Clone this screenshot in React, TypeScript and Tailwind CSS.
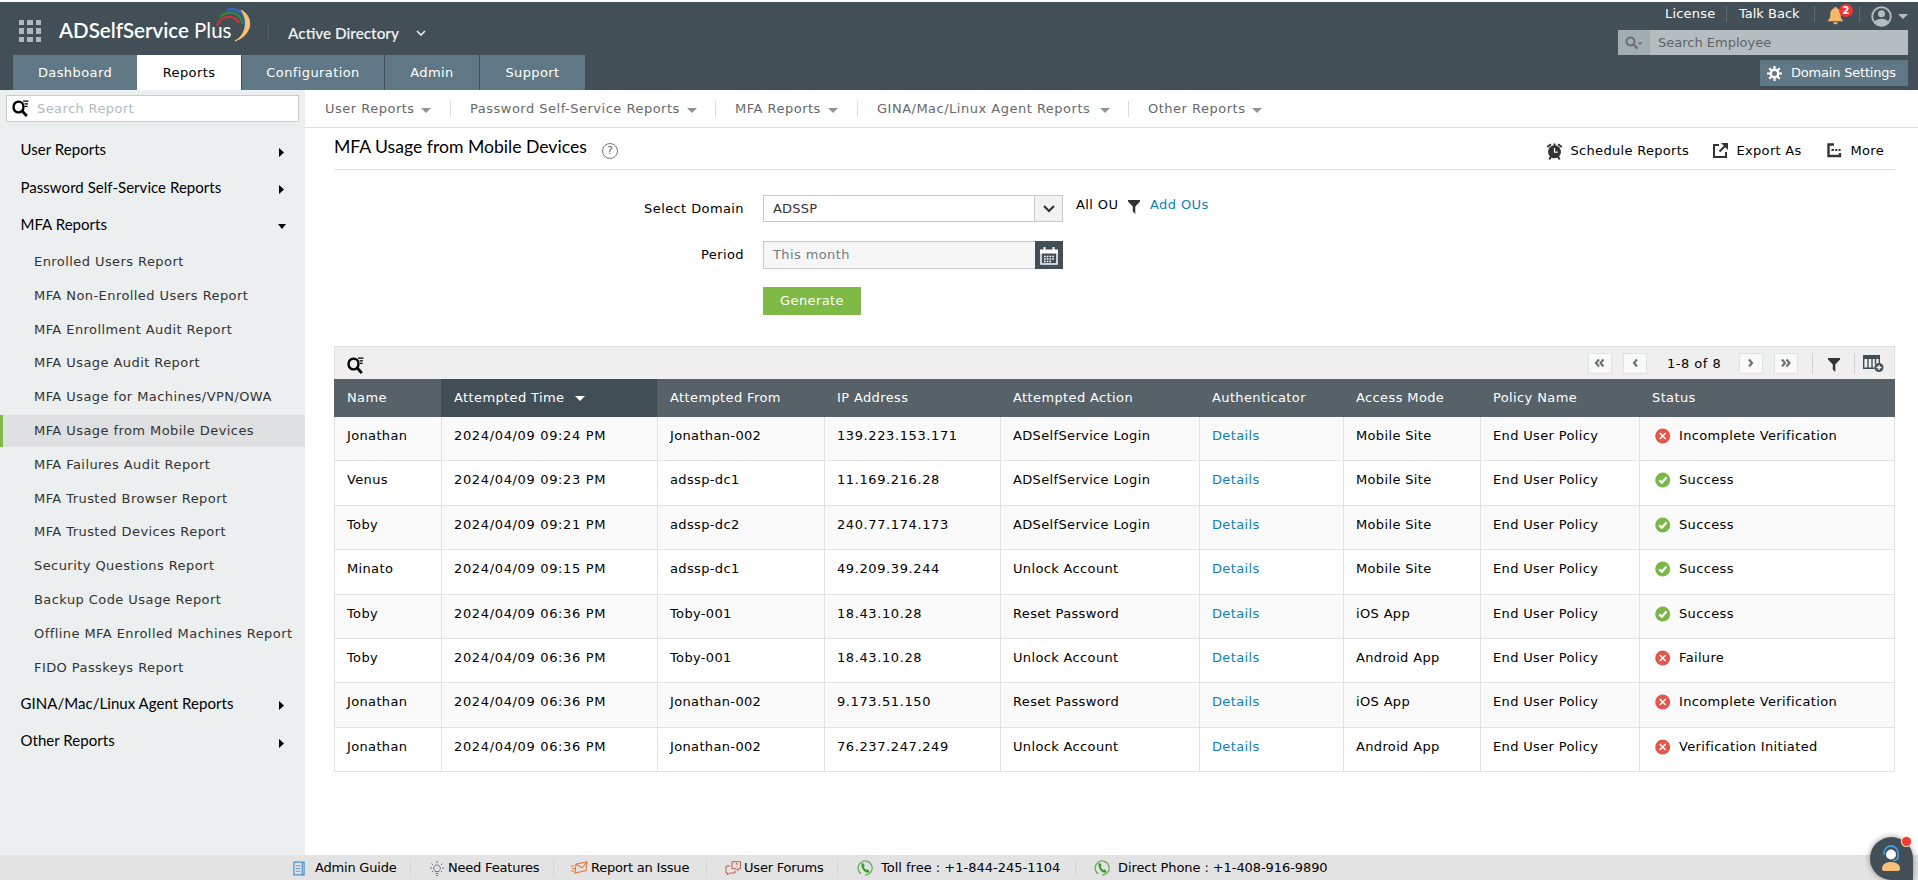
import type { ReactNode } from "react";

const navTabs = [
  { label: "Dashboard", className: "w-[124px] bg-[#607885] text-white" },
  { label: "Reports", className: "w-[104px] bg-white text-black" },
  { label: "Configuration", className: "ml-px w-[142px] bg-[#607885] text-white" },
  { label: "Admin", className: "ml-px w-[94px] bg-[#607885] text-white" },
  { label: "Support", className: "ml-px w-[105px] bg-[#607885] text-white" },
];

const subNav = [
  { label: "User Reports", className: "w-[126px]", text: "w-[96px]" },
  { label: "Password Self-Service Reports", className: "w-[246px]", text: "w-[217px]" },
  { label: "MFA Reports", className: "w-[123px]", text: "w-[93px]" },
  { label: "GINA/Mac/Linux Agent Reports", className: "w-[252px]", text: "w-[223px]" },
  { label: "Other Reports", className: "w-[120px]", text: "w-[104px]" },
];

const mfaReports = [
  "Enrolled Users Report",
  "MFA Non-Enrolled Users Report",
  "MFA Enrollment Audit Report",
  "MFA Usage Audit Report",
  "MFA Usage for Machines/VPN/OWA",
  "MFA Usage from Mobile Devices",
  "MFA Failures Audit Report",
  "MFA Trusted Browser Report",
  "MFA Trusted Devices Report",
  "Security Questions Report",
  "Backup Code Usage Report",
  "Offline MFA Enrolled Machines Report",
  "FIDO Passkeys Report",
];

const headers = [
  "Name",
  "Attempted Time",
  "Attempted From",
  "IP Address",
  "Attempted Action",
  "Authenticator",
  "Access Mode",
  "Policy Name",
  "Status",
];

interface Row {
  name: string;
  time: string;
  from: string;
  ip: string;
  action: string;
  mode: string;
  status: string;
  height: string;
}

const rows: Row[] = [
  { name: "Jonathan", time: "2024/04/09 09:24 PM", from: "Jonathan-002", ip: "139.223.153.171", action: "ADSelfService Login", mode: "Mobile Site", status: "Incomplete Verification", height: "h-[44px]" },
  { name: "Venus", time: "2024/04/09 09:23 PM", from: "adssp-dc1", ip: "11.169.216.28", action: "ADSelfService Login", mode: "Mobile Site", status: "Success", height: "h-[45px]" },
  { name: "Toby", time: "2024/04/09 09:21 PM", from: "adssp-dc2", ip: "240.77.174.173", action: "ADSelfService Login", mode: "Mobile Site", status: "Success", height: "h-[44px]" },
  { name: "Minato", time: "2024/04/09 09:15 PM", from: "adssp-dc1", ip: "49.209.39.244", action: "Unlock Account", mode: "Mobile Site", status: "Success", height: "h-[45px]" },
  { name: "Toby", time: "2024/04/09 06:36 PM", from: "Toby-001", ip: "18.43.10.28", action: "Reset Password", mode: "iOS App", status: "Success", height: "h-[44px]" },
  { name: "Toby", time: "2024/04/09 06:36 PM", from: "Toby-001", ip: "18.43.10.28", action: "Unlock Account", mode: "Android App", status: "Failure", height: "h-[44px]" },
  { name: "Jonathan", time: "2024/04/09 06:36 PM", from: "Jonathan-002", ip: "9.173.51.150", action: "Reset Password", mode: "iOS App", status: "Incomplete Verification", height: "h-[45px]" },
  { name: "Jonathan", time: "2024/04/09 06:36 PM", from: "Jonathan-002", ip: "76.237.247.249", action: "Unlock Account", mode: "Android App", status: "Verification Initiated", height: "h-[44px]" },
];

const gridCols =
  "grid grid-cols-[107px_216px_167px_176px_199px_144px_137px_159px_254px]";

const Caret = ({ className }: { className: string }) => (
  <svg width="10" height="5" viewBox="0 0 10 5" className={className}>
    <path d="M0 0h10L5 5z" fill="currentColor" />
  </svg>
);

const SearchListIcon = () => (
  <svg width="17" height="17" viewBox="0 0 17 17" fill="none" stroke="#000">
    <ellipse cx="6.5" cy="7" rx="5" ry="5.4" strokeWidth="2.4" />
    <path d="M9.2 10l5.6 6" strokeWidth="2.7" />
    <path d="M11 1.2h5.5M12.500 3.800h3.500M13 6.300h2.500" strokeWidth="1.3" />
  </svg>
);

const FunnelIcon = () => (
  <svg width="12" height="14" viewBox="0 0 12 14" fill="#333">
    <path d="M0 0h12v1.500L7.300 6.500V14L4.800 11.500v-5L0 1.500z" />
  </svg>
);

const PhoneIcon = () => (
  <svg width="16" height="16" viewBox="0 0 16 16" fill="none">
    <path d="M4.2 13.8A7 7 0 1 1 8 15" stroke="#6aa84f" strokeWidth="1.2" />
    <path
      d="M4.600 3.600 6 3l1.700 2.600-1 1.200c.5 1.400 1.400 2.400 2.500 3.100l1.300-.7 2 2-1 1.600c-3.800.4-7.900-4.800-6.900-9.200z"
      fill="#2f9a2f"
    />
  </svg>
);

const StatusIcon = ({ ok }: { ok: boolean }) => (
  <svg width="16" height="16" viewBox="0 0 16 16" fill="none" stroke="#fff">
    <circle cx="7.700" cy="8" r="7.500" fill={ok ? "#7ab648" : "#e2564b"} stroke="none" />
    {ok ? (
      <path d="M4.300 8.300l2.600 2.400 4.600-5.200" strokeWidth="2.300" />
    ) : (
      <path d="m4.700 5 6 6M10.700 5l-6 6" strokeWidth="1.500" />
    )}
  </svg>
);

const Header = () => (
  <header className="flex h-[88px] justify-between bg-[#434f57]">
    <div className="flex flex-col">
      <div className="flex h-[53px] pl-[19px]">
        <div className="mt-[18px] grid h-[22px] w-[22px] grid-cols-3 gap-[3px]">
          {Array.from({ length: 9 }, (_, i) => (
            <span key={i} className="bg-[#b0b8bc]" />
          ))}
        </div>
        <div className="relative mt-3 ml-[18px] h-8 w-[192px] font-['Lato'] text-[20.5px] leading-8 whitespace-nowrap text-white">
          <span className="font-semibold">ADSelfService</span>
          <span> Plus</span>
          <svg
            className="absolute top-[-6px] left-[157px]"
            width="36"
            height="34"
            viewBox="0 0 36 34"
            fill="none"
          >
            <path d="M1 18C4 8 17 5 23 15" stroke="#d8302f" strokeWidth="2" />
            <path d="M4 9C12 2 24 3 27 16" stroke="#2f8a3e" strokeWidth="2.2" />
            <path d="M11 2C22-1 31 6 29 19" stroke="#3567c0" strokeWidth="2.4" />
            <path d="M25 2C37 8 38 26 19 33C30 27 33 12 25 2z" fill="#f6c273" stroke="#f6c273" />
          </svg>
        </div>
        <div className="mt-[21px] ml-[17px] h-4 w-px bg-[#525e66]" />
        <div className="mt-[17px] ml-[19px] flex h-7 items-center font-['Lato'] text-[15.3px] font-semibold text-[#eef1f2]">
          <span className="w-[128px]">Active Directory</span>
          <svg width="10" height="7" viewBox="0 0 10 7" fill="none">
            <path d="m1 1 4 4 4-4" stroke="#e5e8ea" strokeWidth="1.7" />
          </svg>
        </div>
      </div>
      <nav className="flex h-[35px] pl-[13px] tracking-[0.4px]">
        {navTabs.map((tab) => (
          <a key={tab.label} className={`flex items-center justify-center ${tab.className}`}>
            {tab.label}
          </a>
        ))}
      </nav>
    </div>
    <div className="flex flex-col items-end pr-2.5 text-white">
      <div className="flex h-7 items-center pb-1">
        <span className="w-[61px] tracking-[0.2px]">License</span>
        <i className="h-4 w-px bg-[#5d686f]" />
        <span className="ml-3 w-[75px]">Talk Back</span>
        <i className="h-4 w-px bg-[#5d686f]" />
        <div className="relative mt-1 ml-3 w-8">
          <svg width="17" height="18" viewBox="0 0 17 19" fill="#f6b96b">
            <path d="M8.500 0c1.200 0 1.700.8 1.700 1.700C13 2.500 14 5 14 8c0 4 1 5 3 7H0c2-2 3-3 3-7 0-3 1-5.500 3.800-6.300C6.800.8 7.300 0 8.500 0zM6 16h5c-.3 3-4.700 3-5 0z" />
          </svg>
          <span className="absolute top-[-3px] left-[12px] flex h-[13px] w-[14px] items-center justify-center rounded-full bg-[#ee3535] text-[10px] leading-none font-bold">
            2
          </span>
        </div>
        <i className="h-4 w-px bg-[#5d686f]" />
        <svg className="mt-1 ml-[11px] text-[#b5bcc0]" width="21" height="21" viewBox="0 0 21 21">
          <circle cx="10.5" cy="10.5" r="10.2" fill="currentColor" />
          <circle cx="10.5" cy="7.2" r="3.6" fill="#434f57" />
          <path
            d="M10.500 2.300a8.200 8.200 0 0 0-6.600 13.100c2-3.600 11.200-3.600 13.200 0A8.200 8.200 0 0 0 10.500 2.300z"
            fill="#434f57"
          />
          <circle cx="10.5" cy="7.8" r="3.5" fill="currentColor" />
        </svg>
        <Caret className="mt-1 ml-1.5 text-[#b5bcc0]" />
      </div>
      <div className="flex h-[25px] w-[290px] bg-[#b6bdc0] text-[#5c6468]">
        <div className="flex w-8 items-center justify-center bg-[#a1adb1]">
          <svg width="18" height="14" viewBox="0 0 18 14" fill="none" stroke="#6b6c76">
            <circle cx="5.5" cy="5.5" r="4" strokeWidth="2" />
            <path d="m8.500 8.500 4 4" strokeWidth="2.4" />
            <path d="M12.500 6.500h5L15 9z" fill="#6b6c76" stroke="none" />
          </svg>
        </div>
        <span className="pt-[3px] pl-2">Search Employee</span>
      </div>
      <div className="mt-[5px] flex h-[26px] w-[148px] items-center bg-[#607885] pl-[7px]">
        <svg width="15" height="15" viewBox="0 0 16 16" fill="none" stroke="#fff">
          <circle cx="8" cy="8" r="4" strokeWidth="2.6" />
          <path
            d="M8 0v3.500M8 12.500V16M0 8h3.500M12.500 8H16M2.400 2.400l2.400 2.400M11.200 11.200l2.400 2.400M2.400 13.600l2.400-2.400M11.200 4.800l2.400-2.400"
            strokeWidth="2.3"
          />
        </svg>
        <span className="ml-[9px] tracking-[-0.2px]">Domain Settings</span>
      </div>
    </div>
  </header>
);

const SidebarGroup = ({ label, open }: { label: string; open?: boolean }) => (
  <div className="flex h-[37.4px] items-center pb-px pl-[20.5px] font-['Lato'] text-[15px] text-black">
    <span className="w-[257px] tracking-[0.04px]">{label}</span>
    {open ? (
      <svg className="mt-1.5" width="8" height="5" viewBox="0 0 8 5">
        <path d="M0 0h8L4 5z" />
      </svg>
    ) : (
      <svg className="mt-1.5 ml-px" width="5" height="9" viewBox="0 0 5 9">
        <path d="M0 0v9l5-4.500z" />
      </svg>
    )}
  </div>
);

const Sidebar = () => (
  <aside className="w-[305px] shrink-0 bg-[#ebefef] pt-[5px]">
    <div className="ml-1.5 flex h-[27px] w-[293px] items-center border border-[#c9cccc] bg-white pl-[5px] tracking-[0.4px] text-[#b3bcbc]">
      <SearchListIcon />
      <span className="pt-px pl-2">Search Report</span>
    </div>
    <div className="mt-[9px]">
      <SidebarGroup label="User Reports" />
      <SidebarGroup label="Password Self-Service Reports" />
      <SidebarGroup label="MFA Reports" open />
    </div>
    <ul className="mt-0.5 tracking-[0.43px] whitespace-nowrap text-[#333]">
      {mfaReports.map((label, i) => (
        <li key={label} className="flex h-[33.8px] items-center">
          <a
            className={
              i === 5
                ? "flex h-8 w-full items-center border-l-3 border-[#80ba4a] bg-[#dfe0e1] pl-[31px]"
                : "pl-[34px]"
            }
          >
            {label}
          </a>
        </li>
      ))}
    </ul>
    <SidebarGroup label="GINA/Mac/Linux Agent Reports" />
    <SidebarGroup label="Other Reports" />
  </aside>
);

const SubNav = () => (
  <nav className="flex h-[38px] items-center border-b border-[#e0e0e0] pl-5 tracking-[0.5px] whitespace-nowrap text-[#66696b]">
    {subNav.map((item, i) => (
      <div
        key={item.label}
        className={`mr-[19px] flex h-4 items-center ${item.className} ${i < subNav.length - 1 ? "border-r border-[#dcdcdc]" : ""}`}
      >
        <span className={item.text}>{item.label}</span>
        <Caret className="mt-1 text-[#8f9294]" />
      </div>
    ))}
  </nav>
);

const TitleBar = () => (
  <div className="ml-[29px] flex h-[42px] w-[1561px] items-center border-b border-[#e0e0e0]">
    <h1 className="w-[268px] pb-[3px] font-['Lato'] text-[17.6px] whitespace-nowrap text-black">
      MFA Usage from Mobile Devices
    </h1>
    <span className="mt-1 flex h-4 w-4 items-center justify-center rounded-full border border-[#777] text-[11px] leading-none text-[#666]">
      ?
    </span>
    <div className="mt-1 ml-auto flex items-center pr-[11px] tracking-[0.3px] text-black">
      <svg width="17" height="18" viewBox="0 0 17 18" fill="none">
        <circle cx="8.5" cy="9.800" r="6.500" fill="#333" />
        <path d="M1.200 5 5 2.200M15.800 5 12 2.200" stroke="#333" strokeWidth="2" />
        <path d="M4.800 15l-1.500 2.500M12.200 15l1.500 2.500M8.500 1.500v3" stroke="#333" strokeWidth="2" />
        <path d="M8.500 6v4.200h3.200" stroke="#fff" strokeWidth="1.200" />
      </svg>
      <span className="ml-2 w-[142px]">Schedule Reports</span>
      <svg width="15" height="15" viewBox="0 0 15 15" fill="none" stroke="#333" strokeWidth="2">
        <path d="M6 2H1v12h12V9M6.500 8.500 12 3" />
        <path d="M8 0h7v7z" fill="#333" stroke="none" />
      </svg>
      <span className="ml-[9px] w-[90px]">Export As</span>
      <svg width="15" height="15" viewBox="0 0 15 15" fill="none" stroke="#333">
        <path d="M7 1.500H1.500V13H13v-3" strokeWidth="2.400" />
        <path d="M4.500 7H7M8.300 7h2M11.600 7h2" strokeWidth="2" />
      </svg>
      <span className="ml-[9px]">More</span>
    </div>
  </div>
);

const FilterForm = () => (
  <div className="flex h-[176px] flex-col pt-[25px] tracking-[0.4px] text-black">
    <div className="flex h-[27px]">
      <label className="w-[439px] pt-1 text-right">Select Domain</label>
      <div className="ml-[19px] flex w-[300px] border border-[#c5c8ca] bg-white">
        <span className="flex-1 pt-[3px] pl-[9px] tracking-[0.2px] text-[#333]">ADSSP</span>
        <span className="flex w-7 items-center justify-center border-l border-[#c5c8ca] bg-[#f2f2f2]">
          <svg width="12" height="8" viewBox="0 0 12 8" fill="none">
            <path d="m1 1 5 5 5-5" stroke="#333" strokeWidth="2.2" />
          </svg>
        </span>
      </div>
      <span className="ml-[13px] w-[52px]">All OU</span>
      <span className="pt-[5px]">
        <FunnelIcon />
      </span>
      <a className="ml-[10px] text-[#0f80b8]">Add OUs</a>
    </div>
    <div className="mt-[19px] flex h-7">
      <label className="w-[439px] pt-1 text-right">Period</label>
      <div className="ml-[19px] flex w-[300px]">
        <span className="flex-1 border border-r-0 border-[#c5c8ca] bg-[#f6f6f6] pt-[3px] pl-[9px] text-[#737b7d]">
          This month
        </span>
        <span className="flex w-7 items-center justify-center bg-[#434f57] pt-0.5">
          <svg width="18" height="18" viewBox="0 0 18 18" fill="none" stroke="#fff">
            <path d="M1 5.500V17h16V5.500" strokeWidth="1.5" />
            <path d="M0 4.500h18" strokeWidth="4" />
            <path d="M4.500 0v4M13.500 0v4" strokeWidth="2" />
            <path d="M4 9.500h10M4 12h10M4 14.500h7" strokeWidth="1.5" strokeDasharray="1.7 1" />
          </svg>
        </span>
      </div>
    </div>
    <button className="mt-[18px] ml-[458px] h-7 w-[98px] bg-[#7fba46] text-white">
      Generate
    </button>
  </div>
);

const PageButton = ({ className, children }: { className: string; children: ReactNode }) => (
  <span className={`flex h-[21px] w-6 items-center justify-center border border-[#dfe3e3] bg-[#f9f9f9] ${className}`}>
    <svg width="12" height="10" viewBox="0 0 12 10" fill="none" stroke="#707375" strokeWidth="2.2">
      {children}
    </svg>
  </span>
);

const ReportTable = () => (
  <section className="ml-[29px] w-[1561px] border-x border-t border-[#e2e2e2]">
    <div className="flex h-8 items-center bg-[#efefef] pl-3">
      <span className="pt-1">
        <SearchListIcon />
      </span>
      <div className="ml-auto flex items-center pr-[10px] text-black">
        <PageButton className="mr-[11px]">
          <path d="M5 1.500 2 5l3 3.500M9.500 1.500l-3 3.500 3 3.500" />
        </PageButton>
        <PageButton className="mr-[20px]">
          <path d="M8 1.500 5 5l3 3.500" />
        </PageButton>
        <span className="w-[72px] pt-0.5 tracking-[0.5px] whitespace-nowrap">1-8 of 8</span>
        <PageButton className="mr-[11px]">
          <path d="M4 1.500 7 5 4 8.500" />
        </PageButton>
        <PageButton className="mr-[14px]">
          <path d="m2 1.500 3 3.500-3 3.500M6.500 1.500l3 3.500-3 3.500" />
        </PageButton>
        <i className="mr-[15px] h-[21px] w-px bg-[#cfcfcf]" />
        <span className="mr-[14px] pt-1">
          <FunnelIcon />
        </span>
        <i className="mr-2 h-[21px] w-px bg-[#cfcfcf]" />
        <svg width="21" height="17" viewBox="0 0 21 17" fill="none" stroke="#434f57">
          <path d="M0 2h17" strokeWidth="4" />
          <path d="M.7 2v11.300h11M5 3v10M9 3v10M12.500 3v6M16.300 3v5" strokeWidth="1.4" />
          <circle cx="16" cy="12.5" r="4.5" fill="#434f57" stroke="none" />
          <path d="M13.500 12.500h5M16 10v5" stroke="#fff" strokeWidth="1.3" />
        </svg>
      </div>
    </div>
    <div className={`${gridCols} -mx-px h-[38px] bg-[#566168] tracking-[0.38px] text-white`}>
      {headers.map((label, i) => (
        <div
          key={label}
          className={`flex items-center pb-px pl-[13px] ${i === 1 ? "bg-[#424e56]" : ""}`}
        >
          {label}
          {i === 1 && <Caret className="mt-0.5 ml-[11px]" />}
        </div>
      ))}
    </div>
    {rows.map((row, i) => (
      <div
        key={i}
        className={`${gridCols} ${row.height} border-b border-[#e2e2e2] tracking-[0.35px] text-black *:border-r *:border-[#e2e2e2] *:pt-[9px] *:pl-3 ${i % 2 ? "bg-white" : "bg-[#fafafa]"}`}
      >
        <div>{row.name}</div>
        <div className="tracking-[0.65px]">{row.time}</div>
        <div>{row.from}</div>
        <div className="tracking-[0.6px]">{row.ip}</div>
        <div>{row.action}</div>
        <div className="text-[#0f80b8]">Details</div>
        <div>{row.mode}</div>
        <div>End User Policy</div>
        <div className="flex border-r-0! pl-[15px]!">
          <span className="mr-2 pt-0.5">
            <StatusIcon ok={row.status === "Success"} />
          </span>
          {row.status}
        </div>
      </div>
    ))}
  </section>
);

const FooterSep = ({ className }: { className: string }) => (
  <i className={`h-4 w-px bg-[#d3d9d9] ${className}`} />
);

const Footer = () => (
  <footer className="flex h-[25px] items-center bg-[#e3e3e3] pt-px pl-[293px] tracking-[-0.2px] whitespace-nowrap text-black">
    <svg width="12" height="15" viewBox="0 0 13 15" fill="none" stroke="#4a90c8">
      <path d="M1 .7h11v13.600H1zM10 .7v13.600" strokeWidth="1.3" />
      <path d="M3 4.500h5M3 7.500h5M3 10.500h5" />
    </svg>
    <span className="ml-[10px] w-[95px]">Admin Guide</span>
    <FooterSep className="mr-[19px]" />
    <svg width="14" height="15" viewBox="0 0 14 15" fill="none" stroke="#6f7d84">
      <path d="M5 10.500C2.500 7.500 4 4 7 4s4.500 3.500 2 6.500zM5.500 12.500h3M6 14.500h2" />
      <path d="M7 0v2M1.500 2.500l1.500 1.500M12.500 2.500 11 4M0 7h2M12 7h2M2 11l1-1M12 11l-1-1" />
    </svg>
    <span className="ml-[4px] w-[105px]">Need Features</span>
    <FooterSep className="mr-[17px]" />
    <svg width="17" height="14" viewBox="0 0 17 14" fill="none" stroke="#e0793a">
      <path d="m5 3 11-2-1 8.500L4 12zM5 3l6 4 5-6M0 5h3M1 7.500h3M0 10h3" strokeWidth="1.1" />
    </svg>
    <span className="ml-[3px] w-[115px]">Report an Issue</span>
    <FooterSep className="mr-[18px]" />
    <svg width="17" height="15" viewBox="0 0 17 15" fill="none" stroke="#bf5b4c">
      <path d="M7 .7h8.500v7H13v2l-2-2H7zM5 5H1v7h1.500v2l2-2H10V9.500M11 2.500h1v1.500M11 5.500h.5" />
    </svg>
    <span className="ml-[2px] w-[93px]">User Forums</span>
    <FooterSep className="mr-[19px]" />
    <PhoneIcon />
    <span className="ml-[8px] w-[194px] tracking-normal">Toll free : +1-844-245-1104</span>
    <FooterSep className="mr-[18px]" />
    <PhoneIcon />
    <span className="ml-[8px] tracking-[-0.08px]">Direct Phone : +1-408-916-9890</span>
  </footer>
);

const ChatBubble = () => (
  <div className="absolute right-[5px] bottom-0 h-[43px] w-[43px] rounded-full rounded-br-2xl bg-[#434f57] shadow-[0_0_6px_rgba(0,0,0,0.4)]">
    <svg width="43" height="43" viewBox="0 0 43 43" fill="none">
      <circle cx="21" cy="17.5" r="5" fill="#fff" />
      <path d="M14 18v-2a7 7 0 0 1 14 0v4c0 2-2 3.500-5 3.500" stroke="#3d9bdc" strokeWidth="1.8" />
      <path d="M12 32c0-5 4-7 9-7s9 2 9 7c0 1-1 2-2 2H14c-1 0-2-1-2-2z" fill="#f6c07c" />
    </svg>
    <span className="absolute top-0 right-[2px] h-[9px] w-[9px] rounded-full bg-[#f03a35] ring-1 ring-[#f7ddc0]" />
  </div>
);

export default function App() {
  return (
    <div className="relative flex h-[880px] w-[1918px] flex-col overflow-hidden bg-white pt-0.5 font-['DejaVu_Sans',sans-serif] text-[13px] leading-5">
      <Header />
      <div className="flex h-[765px]">
        <Sidebar />
        <main className="flex-1">
          <SubNav />
          <TitleBar />
          <FilterForm />
          <ReportTable />
        </main>
      </div>
      <Footer />
      <ChatBubble />
    </div>
  );
}
